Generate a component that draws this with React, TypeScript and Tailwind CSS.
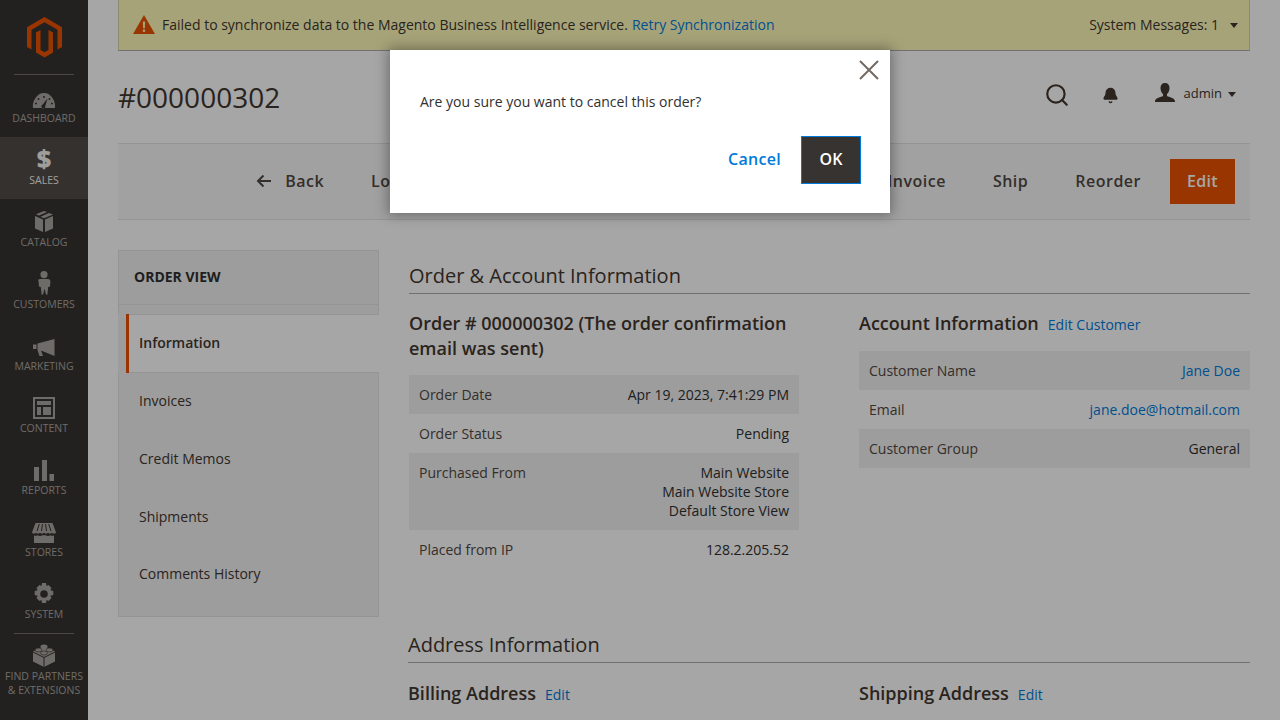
import { Bell, Search } from 'lucide-react'
import type { ReactNode } from 'react'

const orderRows = [
  { label: 'Order Date', value: ['Apr 19, 2023, 7:41:29 PM'], shaded: true },
  { label: 'Order Status', value: ['Pending'], shaded: false },
  { label: 'Purchased From', value: ['Main Website', 'Main Website Store', 'Default Store View'], shaded: true },
  { label: 'Placed from IP', value: ['128.2.205.52'], shaded: false },
]

const accountRows = [
  { label: 'Customer Name', value: 'Jane Doe', link: true, shaded: true },
  { label: 'Email', value: 'jane.doe@hotmail.com', link: true, shaded: false },
  { label: 'Customer Group', value: 'General', link: false, shaded: true },
]

const navIcons: Record<string, ReactNode> = {
  DASHBOARD: (
    <svg width="24" height="18" viewBox="0 0 24 18" fill="currentColor">
      <path fillRule="evenodd" d="M1 17c-1-7 4-15 11-15s12 8 11 15H1zM12 5a1 1 0 100 2 1 1 0 000-2zM6.500 7a1 1 0 100 2 1 1 0 000-2zM17.500 7a1 1 0 100 2 1 1 0 000-2zM4 11.500a1 1 0 100 2 1 1 0 000-2zM20 11.500a1 1 0 100 2 1 1 0 000-2zM15.500 7.500l-4.800 6a2 2 0 102.600 1.400l2.200-7.400z" />
    </svg>
  ),
  CATALOG: (
    <svg width="20" height="22" viewBox="0 0 20 22" fill="currentColor">
      <path d="M10 0l3 1-8 3.500L2 3.300 10 0zM15 2l4 1.500-9 3.800-3.500-1.500L15 2zM1 5l8 3.500V21l-8-3.500V5zM19 5v12.500L11 21V8.500L19 5z" />
    </svg>
  ),
  CUSTOMERS: (
    <svg width="14" height="24" viewBox="0 0 14 24" fill="currentColor">
      <path d="M7 0a3.600 3.600 0 110 7.200A3.600 3.600 0 017 0zM3 8h8c1.500 0 2.400 1 2.400 2.500l-.4 5-1.800.5-.9 8-1.500-1-1-4.500h-.6l-1 4.500-1.500 1-.9-8-1.800-.5-.4-5C.6 9 1.500 8 3 8z" />
    </svg>
  ),
  MARKETING: (
    <svg width="22" height="18" viewBox="0 0 22 18" fill="currentColor">
      <path d="M21.500 0v17L8 11.500l2 5.500H6.500L4.500 11V4.500L21.500 0zM0 5.500h3.500V10H0V5.500z" />
    </svg>
  ),
  CONTENT: (
    <svg width="22" height="22" viewBox="0 0 22 22" fill="currentColor">
      <path fillRule="evenodd" d="M0 0h22v22H0V0zm2 2v18h18V2H2zm2 2h14v4H4V4zm0 6h4v8H4v-8zm6 0h8v8h-8v-8z" />
    </svg>
  ),
  REPORTS: (
    <svg width="20" height="21" viewBox="0 0 20 21" fill="currentColor">
      <path d="M0 7h5v14H0V7zM8 0h5v21H8V0zM15.500 14H20v7h-4.500v-7z" />
    </svg>
  ),
  STORES: (
    <svg width="24" height="20" viewBox="0 0 24 20" fill="currentColor">
      <path d="M3.500 0h17L24 9.500c-.5 1.500-3.500 1.500-4 0-.5 1.500-3.500 1.500-4 0-.5 1.500-3.500 1.500-4 0-.5 1.500-3.500 1.500-4 0-.5 1.500-3.500 1.500-4 0-.5 1.500-3.500 1.500-4 0L3.500 0zM2 12.500c1 .5 2.500.5 3.500-.2 1.500 1 3.500 1 5 0h3c1.500 1 3.500 1 5 0 1 .7 2.500.7 3.500.2V20H2v-7.500z" />
      <path d="M7.300 1l-2.300 7M10.500 1L9.500 8M13.500 1l1 7M16.700 1l2.300 7" stroke="#373330" strokeWidth="1" />
    </svg>
  ),
  SYSTEM: (
    <svg width="22" height="22" viewBox="0 0 22 22" fill="currentColor">
      <path fillRule="evenodd" d="M9 0h4l.6 3 2-.9 2.900 2.900-1.200 2.300 3 .7v4l-3 .7 1.200 2.300-2.900 2.900-2-1-.6 3.100H9l-.6-3.100-2 1-2.900-2.900 1.200-2.300-3-.7V8l3-.7-1.200-2.300 2.900-2.900 2 .9L9 0zm2 7.200a3.800 3.800 0 100 7.600 3.800 3.800 0 000-7.600z" />
    </svg>
  ),
}

const navItems = ['DASHBOARD', 'SALES', 'CATALOG', 'CUSTOMERS', 'MARKETING', 'CONTENT', 'REPORTS', 'STORES', 'SYSTEM']

function Sidebar() {
  return (
    <aside className="w-[88px] h-[720px] shrink-0 bg-[#373330] flex flex-col items-center text-[#aaa6a0]">
      <div className="h-[75px] w-full flex flex-col items-center">
        <svg width="36" height="42" viewBox="0 0 36 42" fill="#eb5202" className="mt-[17px] ml-[1px]">
          <path d="M17.500 0L35 10.200V30l-4.500 2.500V12.800L17.500 5.300 4.500 12.800v19.700L0 30V10.200L17.500 0z" />
          <path d="M9 15.500l4.500-2.500v20l4 2.300 4-2.300V13l4.500 2.500V35.500L17.500 40.500 9 35.500V15.500z" />
        </svg>
        <div className="mt-auto w-[60px] h-px bg-[#736e69]" />
      </div>
      {navItems.map((item) => (
        <div
          key={item}
          className={`w-full h-[62px] flex flex-col items-center ${item === 'SALES' ? 'bg-[#514c48] text-[#f7f3eb]' : ''}`}
        >
          <div className="h-[34px] flex items-end justify-center">
            {item === 'SALES' ? (
              <span className="text-[25px] leading-[30px] font-extrabold -mb-[2px]">$</span>
            ) : (
              navIcons[item]
            )}
          </div>
          <div className="mt-[2px] text-[10.5px] leading-[14px]">{item}</div>
        </div>
      ))}
      <div className="w-[60px] h-px bg-[#736e69]" />
      <svg width="24" height="24" viewBox="0 0 24 24" fill="currentColor" className="mt-[9px]">
        <path d="M12 3l11 5.500v10L12 24 1 18.500v-10L12 3z" />
        <path d="M1 9l11 5.500L23 9M12 14.500V24" stroke="#373330" strokeWidth="1" fill="none" />
        <ellipse cx="12" cy="3.500" rx="3.500" ry="2" />
        <ellipse cx="6.500" cy="7" rx="3.500" ry="2" stroke="#373330" strokeWidth=".6" />
        <ellipse cx="17.500" cy="7" rx="3.500" ry="2" stroke="#373330" strokeWidth=".6" />
        <ellipse cx="12" cy="10" rx="3.500" ry="2" stroke="#373330" strokeWidth=".6" />
      </svg>
      <div className="mt-[2px] text-[10.5px] leading-[14px] text-center">
        FIND PARTNERS
        <br />& EXTENSIONS
      </div>
    </aside>
  )
}

function Toolbar() {
  const btn = 'text-[16px] font-semibold tracking-[0.5px] text-[#514943] whitespace-nowrap pb-[2px]'
  return (
    <div className="h-[77px] bg-[#f8f8f8] border-y border-[#e3e3e3] flex items-center justify-end pr-[15px] gap-[47px]">
      <div className={`${btn} flex items-center gap-[13px]`}>
        <svg width="16" height="14" viewBox="0 0 16 14" fill="none" stroke="currentColor" strokeWidth="2">
          <path d="M15 7H2M7.500 1.500L2 7l5.500 5.500" />
        </svg>
        Back
      </div>
      <div className={btn}>Login as Customer</div>
      <div className={btn}>Cancel</div>
      <div className={btn}>Send Email</div>
      <div className={`${btn} w-[33px]`}>Hold</div>
      <div className={btn}>Invoice</div>
      <div className={btn}>Ship</div>
      <div className={btn}>Reorder</div>
      <div className="h-[45px] w-[65px] -ml-[18px] bg-[#eb5202] text-white flex items-center justify-center text-[16px] font-semibold tracking-[0.3px] pb-[2px]">
        Edit
      </div>
    </div>
  )
}

function SideTabs() {
  return (
    <div className="w-[261px] h-[367px] bg-[#f1f1f1] border border-[#e3e3e3] text-[14px] text-[#41362f]">
      <div className="h-[53px] flex items-center pl-[15px] pb-[3px] font-bold text-[#303030]">ORDER VIEW</div>
      <div className="h-[10px] border-t border-[#e3e3e3]" />
      <div className="relative h-[59px] -ml-px w-[261px] flex items-center pl-[21px] pb-[2px] font-semibold">
        <div className="absolute inset-y-0 left-0 w-[8px] bg-[#f1f1f1]" />
        <div className="absolute inset-y-0 left-[8px] right-0 bg-white border-y border-[#e3e3e3]" />
        <div className="absolute inset-y-0 left-[8px] w-[3px] bg-[#eb5202]" />
        <span className="relative">Information</span>
      </div>
      <div className="-mt-[2px]">
        {['Invoices', 'Credit Memos', 'Shipments', 'Comments History'].map((t) => (
          <div key={t} className="h-[58px] flex items-center pl-[20px] last:-mt-px">
            {t}
          </div>
        ))}
      </div>
    </div>
  )
}

function SectionTitle({ children }: { children: ReactNode }) {
  return (
    <div className="h-[31px] border-b border-[#adadad] text-[20px] leading-[25px] text-[#41362f]">{children}</div>
  )
}

function Heading({ title, link }: { title: string; link: string }) {
  return (
    <div className="flex items-baseline gap-[9px]">
      <span className="text-[18px] leading-[25px] font-semibold text-[#41362f]">{title}</span>
      <span className="text-[14px] text-[#007bdb]">{link}</span>
    </div>
  )
}

function OrderDetails() {
  return (
    <div className="flex-1 text-[14px] leading-[19px] text-[#303030]">
      <div className="pt-[13px]">
        <SectionTitle>Order &amp; Account Information</SectionTitle>
      </div>
      <div className="flex gap-[60px] mt-[17px]">
        <div className="w-[390px]">
          <div className="text-[18px] leading-[25px] font-semibold text-[#41362f]">
            Order # 000000302 (The order confirmation email was sent)
          </div>
          <div className="mt-[14px]">
            {orderRows.map((row) => (
              <div
                key={row.label}
                className={`flex justify-between px-[10px] py-[10px] ${row.shaded ? 'bg-[#f1f1f1]' : ''}`}
              >
                <span className="text-[#514943]">{row.label}</span>
                <span className="text-right">
                  {row.value.map((v) => (
                    <div key={v}>{v}</div>
                  ))}
                </span>
              </div>
            ))}
          </div>
        </div>
        <div className="flex-1">
          <Heading title="Account Information" link="Edit Customer" />
          <div className="mt-[15px]">
            {accountRows.map((row) => (
              <div
                key={row.label}
                className={`flex justify-between px-[10px] py-[10px] ${row.shaded ? 'bg-[#f1f1f1]' : ''}`}
              >
                <span className="text-[#514943]">{row.label}</span>
                <span className={row.link ? 'text-[#007bdb]' : ''}>{row.value}</span>
              </div>
            ))}
          </div>
        </div>
      </div>
      <div className="mt-[63px] -ml-px">
        <SectionTitle>Address Information</SectionTitle>
      </div>
      <div className="flex gap-[60px] mt-[18px] -ml-px">
        <div className="w-[391px]">
          <Heading title="Billing Address" link="Edit" />
        </div>
        <Heading title="Shipping Address" link="Edit" />
      </div>
    </div>
  )
}

function Notice() {
  return (
    <div className="h-[51px] bg-[#fffbbb] border border-[#d6d6b0] border-t-0 border-b-[#adadad] flex items-center pl-[14px] pr-[11px] text-[14px] text-[#41362f]">
      <svg width="22" height="19" viewBox="0 0 22 19" fill="#eb5202" className="mr-[7px] -mt-px">
        <path fillRule="evenodd" d="M11 0l11 19H0L11 0zM9.800 6.500l.4 7h1.600l.4-7H9.800zM11 14.500a1.300 1.300 0 100 2.600 1.300 1.300 0 000-2.600z" />
      </svg>
      <span className="-mt-[2px]">Failed to synchronize data to the Magento Business Intelligence service.</span>
      <span className="ml-[4px] -mt-[2px] text-[#007bdb]">Retry Synchronization</span>
      <span className="ml-auto -mt-[2px]">System Messages: 1</span>
      <span className="ml-[11px] w-0 h-0 border-x-[4px] border-x-transparent border-t-[5px] border-t-[#41362f]" />
    </div>
  )
}

function Header() {
  return (
    <div className="h-[92px] flex items-center text-[#41362f]">
      <h1 className="text-[28px] leading-[38px] -mt-[1px]">#000000302</h1>
      <div className="ml-auto flex items-center pr-[14px] pb-[4px]">
        <Search size={26} strokeWidth={2} />
        <Bell size={17} fill="currentColor" className="ml-[32px]" />
        <svg width="20" height="19" viewBox="0 0 20 19" fill="currentColor" className="ml-[36px] -mt-[5px]">
          <path d="M10 0c3 0 4.500 2 4.500 5 0 2.500-1 5-2.500 6v2c2 1 7.500 2 8 5v1H0v-1c.5-3 6-4 8-5v-2C6.500 10 5.500 7.500 5.500 5c0-3 1.500-5 4.500-5z" />
        </svg>
        <span className="ml-[9px] mb-[2px] text-[13px]">admin</span>
        <span className="ml-[6px] mb-[2px] w-0 h-0 border-x-[4px] border-x-transparent border-t-[5px] border-t-[#41362f]" />
      </div>
    </div>
  )
}

function ConfirmDialog() {
  return (
    <div className="absolute left-[390px] top-[50px] w-[500px] h-[163px] bg-white shadow-[0_0_12px_2px_rgba(0,0,0,0.35)] px-[30px] text-[14px] text-[#303030]">
      <svg width="20" height="20" viewBox="0 0 20 20" stroke="#736963" strokeWidth="2" className="absolute right-[11px] top-[10px]">
        <path d="M1 1l18 18M19 1L1 19" />
      </svg>
      <p className="pt-[42px] leading-[20px]">Are you sure you want to cancel this order?</p>
      <div className="absolute right-[29px] top-[86px] flex items-center gap-[20px]">
        <span className="text-[16px] font-semibold tracking-[0.3px] text-[#007bdb] -mt-[2px]">Cancel</span>
        <div className="w-[60px] h-[48px] bg-[#373330] border border-[#007bdb] text-white text-[16px] font-semibold flex items-center justify-center pb-[2px]">
          OK
        </div>
      </div>
    </div>
  )
}

export default function App() {
  return (
    <div className="relative w-[1280px] h-[720px] overflow-hidden bg-white flex font-['Open_Sans',sans-serif]">
      <Sidebar />
      <main className="flex-1 pl-[30px] pr-[30px]">
        <Notice />
        <Header />
        <Toolbar />
        <div className="flex mt-[30px] gap-[30px]">
          <SideTabs />
          <OrderDetails />
        </div>
      </main>
      <div className="absolute inset-0 bg-black/35" />
      <ConfirmDialog />
    </div>
  )
}
